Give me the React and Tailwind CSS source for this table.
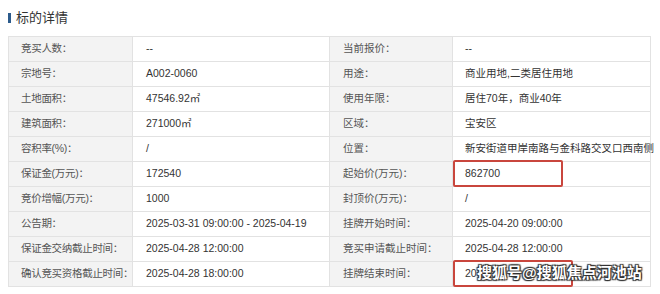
import React from 'react';

const ROWS = [
  ['竞买人数：', '--', '当前报价：', '--'],
  ['宗地号：', 'A002-0060', '用途：', '商业用地,二类居住用地'],
  ['土地面积：', '47546.92㎡', '使用年限：', '居住70年，商业40年'],
  ['建筑面积：', '271000㎡', '区域：', '宝安区'],
  ['容积率(%)：', '/', '位置：', '新安街道甲岸南路与金科路交叉口西南侧'],
  ['保证金(万元)：', '172540', '起始价(万元)：', '862700', 'box1'],
  ['竞价增幅(万元)：', '1000', '封顶价(万元)：', '/'],
  ['公告期：', '2025-03-31 09:00:00 - 2025-04-19', '挂牌开始时间：', '2025-04-20 09:00:00'],
  ['保证金交纳截止时间：', '2025-04-28 12:00:00', '竞买申请截止时间：', '2025-04-28 12:00:00'],
  ['确认竞买资格截止时间：', '2025-04-28 18:00:00', '挂牌结束时间：', '20', 'box2'],
];

const font = { fontFamily: '"Liberation Sans", "Noto Sans CJK SC", sans-serif' };

export default function App() {
  return (
    <div className="relative w-[660px] h-[294px] bg-white overflow-hidden" style={font}>
      {/* title */}
      <div className="flex items-start gap-[5px] pl-[8px] pt-[11px] h-[36px]">
        <span className="w-[3px] h-[10px] bg-[#2c5b8c] mt-[2px]" />
        <span className="text-[13px] leading-[13px] text-[#333]">标的详情</span>
      </div>

      {/* table */}
      <div className="ml-[8px] w-[643px] border-t border-l border-r border-[#e2e2e2] text-[10.5px] whitespace-nowrap">
        {ROWS.map((r, i) => (
          <div key={i} className="flex h-[25px] border-b border-[#e2e2e2]">
            <div className="w-[124px] shrink-0 bg-[#f3f3f3] border-r border-[#e2e2e2] flex items-center pl-[12px] text-[#555] tracking-[-0.3px]">
              {r[0]}
            </div>
            <div className="w-[197px] shrink-0 border-r border-[#e2e2e2] flex items-center pl-[13px] text-[#333]">
              {r[1]}
            </div>
            <div className="w-[123px] shrink-0 bg-[#f3f3f3] border-r border-[#e2e2e2] flex items-center pl-[13px] text-[#555]">
              {r[2]}
            </div>
            <div className="relative flex-1 flex items-center pl-[12px] text-[#333]">
              {r[3]}
              {r[4] === 'box1' && (
                <div className="absolute left-0 top-[-2px] w-[110px] h-[27px] border-2 border-[#c9463d] rounded-[2px]" />
              )}
              {r[4] === 'box2' && (
                <div className="absolute left-0 top-[-2px] w-[120px] h-[27px] border-2 border-[#c9463d] rounded-[2px]" />
              )}
            </div>
          </div>
        ))}
      </div>

      {/* watermark */}
      <div className="absolute left-[477px] top-[263px] text-[15px] leading-[20px] font-bold text-white whitespace-nowrap [text-shadow:0_0_1px_#222,1px_1px_1px_#333,-1px_-1px_1px_#333,1px_-1px_1px_#333,-1px_1px_1px_#333]">
        搜狐号@搜狐焦点河池站
      </div>
    </div>
  );
}
